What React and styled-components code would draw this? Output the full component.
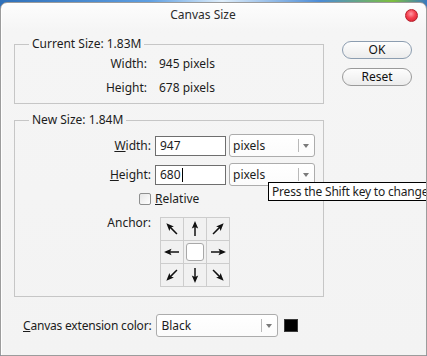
import React from 'react';
import styled, { createGlobalStyle } from 'styled-components';

const GlobalStyle = createGlobalStyle`
  html, body {
    margin: 0;
    padding: 0;
  }
  body {
    width: 427px;
    height: 356px;
    overflow: hidden;
    background: linear-gradient(90deg, #2f70b9 0%, #5e9fe2 35%, #dfeefb 52%, #4b8bd5 75%, #7dbf3f 92%, #3a78c0 100%);
    font-family: "Noto Sans", "Liberation Sans", sans-serif;
  }
`;

const Window = styled.div`
  position: relative;
  box-sizing: border-box;
  margin-top: 2px;
  width: 427px;
  height: 354px;
  border: 1px solid #9c9c9c;
  border-radius: 7px 7px 0 0;
  background: linear-gradient(#fdfdfd 0px, #f5f5f5 28px, #f3f3f3 100%);
  box-shadow: inset 1px 1px 0 #ffffff;
  overflow: hidden;
  color: #1c1c1c;
  font-size: 12px;
  line-height: 16px;
`;

const TitleBar = styled.div`
  display: flex;
  align-items: center;
  height: 24px;
  padding-right: 8px;
`;

const Title = styled.div`
  flex: 1;
  text-align: center;
  color: #2b2b2b;
  font-size: 12px;
`;

const CloseBall = styled.div`
  width: 13px;
  height: 13px;
  border-radius: 50%;
  box-sizing: border-box;
  border: 1px solid #b3202c;
  background: radial-gradient(circle at 45% 35%, #ff9aa4 0%, #f5404f 45%, #d41a2b 100%);
`;

const Main = styled.div`
  display: flex;
  padding: 9px 0 0 13px;
`;

const LeftColumn = styled.div`
  display: flex;
  flex-direction: column;
`;

const Group = styled.fieldset`
  margin: 0 0 ${p => p.mb || 0}px;
  padding: 0 0 ${p => p.pb}px;
  width: 310px;
  box-sizing: border-box;
  min-width: 0;
  border: 1px solid #c6c6c6;
`;

const Legend = styled.legend`
  margin-left: 14px;
  padding: 0 3px;
  line-height: 16px;
`;

const InfoGrid = styled.div`
  display: grid;
  grid-template-columns: 132px auto;
  column-gap: 12px;
  grid-auto-rows: 24px;
  align-items: center;
`;

const InfoLabel = styled.span`
  text-align: right;
`;

const Row = styled.div`
  display: flex;
  align-items: ${p => p.align || 'center'};
  gap: ${p => p.gap}px;
  margin-top: ${p => p.mt}px;
`;

const FieldLabel = styled.div`
  width: 136px;
  text-align: right;
  display: flex;
  justify-content: flex-end;
  margin-top: ${p => p.mt || 0}px;
`;

const TextBox = styled.div`
  box-sizing: border-box;
  width: 71px;
  height: 20px;
  border: 1px solid #6e6e6e;
  background: #fff;
  padding: 1px 0 0 4px;
  display: flex;
  align-items: center;
  margin-right: -1px;
`;

const Caret = styled.span`
  display: inline-block;
  width: 1px;
  height: 14px;
  background: #000;
  margin-left: 1px;
`;

const Select = styled.div`
  box-sizing: border-box;
  width: ${p => p.w}px;
  height: 23px;
  border: 1px solid #acacac;
  border-radius: 3px;
  background: linear-gradient(#ffffff, #fbfbfb);
  display: flex;
  align-items: center;
  padding-left: ${p => p.pl || 3}px;
`;

const SelectText = styled.span`
  flex: 1;
`;

const SelectDivider = styled.span`
  width: 1px;
  height: 13px;
  background: #b9b9b9;
`;

const SelectArrow = styled.span`
  width: 0;
  height: 0;
  margin: 0 5px 0 4px;
  border-left: 3px solid transparent;
  border-right: 3px solid transparent;
  border-top: 4px solid #7a7a7a;
`;

const CheckBox = styled.span`
  box-sizing: border-box;
  width: 12px;
  height: 12px;
  border: 1px solid #8e8f8f;
  border-radius: 2px;
  background: linear-gradient(135deg, #e6e6e6, #ffffff);
`;

const AnchorGrid = styled.div`
  display: grid;
  grid-template-columns: repeat(3, 22px);
  grid-template-rows: repeat(3, 22px);
  gap: 1px;
  padding: 1px;
  background: #cdcdcd;
`;

const AnchorCell = styled.div`
  background: #f1f1f1;
  display: flex;
  align-items: center;
  justify-content: center;
`;

const CenterKnob = styled.div`
  box-sizing: border-box;
  width: 18px;
  height: 18px;
  border: 1px solid #a9a9a9;
  border-radius: 3px;
  background: #fff;
`;

const BottomRow = styled.div`
  display: flex;
  align-items: center;
  gap: 5px;
  margin: 17px 0 0 9px;
`;

const BottomLabel = styled.span`
  letter-spacing: -0.2px;
`;

const Swatch = styled.span`
  box-sizing: border-box;
  width: 14px;
  height: 13px;
  background: #000;
  border: 1px solid #3a3a3a;
  margin-left: 1px;
`;

const RightColumn = styled.div`
  display: flex;
  flex-direction: column;
  gap: 9px;
  margin: 5px 0 0 18px;
`;

const Button = styled.div`
  box-sizing: border-box;
  width: 70px;
  height: 18px;
  border: 1px solid ${p => (p.primary ? '#8c9db0' : '#9a9a9a')};
  border-radius: 9px;
  background: linear-gradient(#fdfdfd, #ececec);
  display: flex;
  align-items: center;
  justify-content: center;
  color: #111;
`;

const Tooltip = styled.div`
  position: absolute;
  left: 267px;
  top: 179px;
  height: 19px;
  box-sizing: border-box;
  padding: 0 3px;
  border: 1px solid #000;
  background: #ffffff;
  white-space: nowrap;
  line-height: 17px;
  letter-spacing: -0.2px;
`;

// outward-pointing anchor arrow, drawn pointing right and rotated
const Arrow = ({ angle }) => (
  <svg width="20" height="20" viewBox="0 0 20 20">
    <g transform={`rotate(${angle} 10 10)`}>
      <line x1="3" y1="10" x2="13" y2="10" stroke="#111" strokeWidth="1.5" />
      <polygon points="18,10 10.5,6.8 12,10 10.5,13.2" fill="#111" />
    </g>
  </svg>
);

const anchorAngles = [225, 270, 315, 180, null, 0, 135, 90, 45];

export default function App() {
  return (
    <>
      <GlobalStyle />
      <Window>
        <TitleBar>
          <Title>Canvas Size</Title>
          <CloseBall />
        </TitleBar>
        <Main>
          <LeftColumn>
            <Group pb={3} mb={8}>
              <Legend>Current Size: 1.83M</Legend>
              <InfoGrid>
                <InfoLabel>Width:</InfoLabel>
                <span>945 pixels</span>
                <InfoLabel>Height:</InfoLabel>
                <span>678 pixels</span>
              </InfoGrid>
            </Group>
            <Group pb={9}>
              <Legend>New Size: 1.84M</Legend>
              <Row gap={4} mt={6}>
                <FieldLabel><span><u>W</u>idth:</span></FieldLabel>
                <TextBox>947</TextBox>
                <Select w={86}>
                  <SelectText>pixels</SelectText>
                  <SelectDivider />
                  <SelectArrow />
                </Select>
              </Row>
              <Row gap={4} mt={6}>
                <FieldLabel><span><u>H</u>eight:</span></FieldLabel>
                <TextBox>680<Caret /></TextBox>
                <Select w={86}>
                  <SelectText>pixels</SelectText>
                  <SelectDivider />
                  <SelectArrow />
                </Select>
              </Row>
              <Row gap={4} mt={5}>
                <FieldLabel><CheckBox /></FieldLabel>
                <span><u>R</u>elative</span>
              </Row>
              <Row gap={9} mt={10} align="flex-start">
                <FieldLabel mt={-2}>Anchor:</FieldLabel>
                <AnchorGrid>
                  {anchorAngles.map((a, i) => (
                    <AnchorCell key={i}>
                      {a === null ? <CenterKnob /> : <Arrow angle={a} />}
                    </AnchorCell>
                  ))}
                </AnchorGrid>
              </Row>
            </Group>
            <BottomRow>
              <BottomLabel><u>C</u>anvas extension color:</BottomLabel>
              <Select w={122} pl={4}>
                <SelectText>Black</SelectText>
                <SelectDivider />
                <SelectArrow />
              </Select>
              <Swatch />
            </BottomRow>
          </LeftColumn>
          <RightColumn>
            <Button primary>OK</Button>
            <Button>Reset</Button>
          </RightColumn>
        </Main>
        <Tooltip>Press the Shift key to change</Tooltip>
      </Window>
    </>
  );
}
